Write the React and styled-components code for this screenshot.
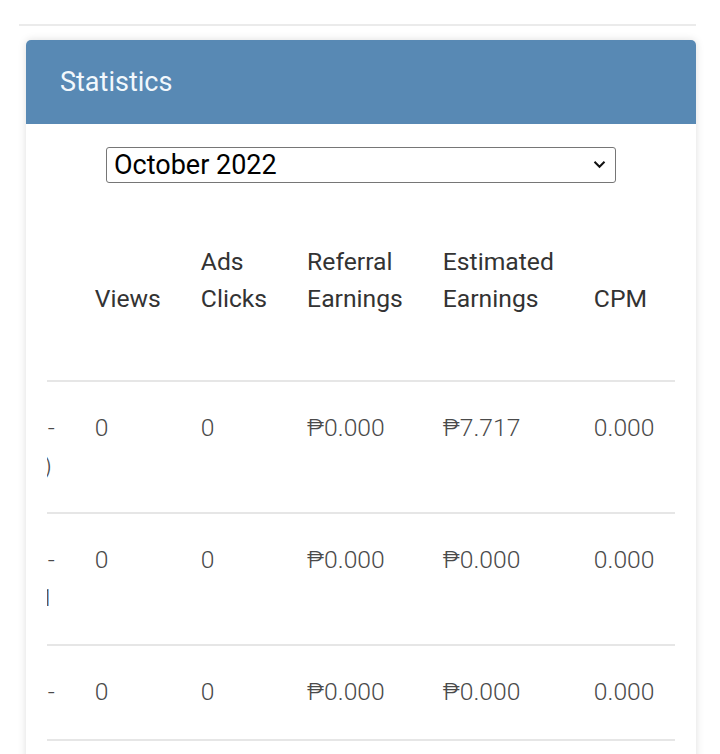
import React, { useLayoutEffect, useRef } from "react";
import styled, { createGlobalStyle } from "styled-components";

const GlobalStyle = createGlobalStyle`
  html, body {
    margin: 0;
    padding: 0;
    background: #ffffff;
    font-family: Roboto, "Liberation Sans", sans-serif;
  }
  * {
    box-sizing: border-box;
  }
`;

const Page = styled.div`
  width: 720px;
  padding: 24px 24px 40px 19px;
`;

const Divider = styled.div`
  height: 2px;
  background: #ebebeb;
`;

const Card = styled.section`
  margin: 14px 0 0 7px;
  background: #ffffff;
  border-radius: 5px;
  box-shadow: 0 0 9px rgba(0, 0, 0, 0.13);
`;

const CardHeader = styled.header`
  height: 84px;
  display: flex;
  align-items: center;
  padding: 0 34px;
  background: #5889b4;
  border-radius: 5px 5px 0 0;
`;

const Title = styled.h2`
  margin: 0;
  font-size: 27px;
  font-weight: 400;
  color: #f2f8fc;
`;

const CardBody = styled.div`
  padding: 23px 21px 0;
`;

const SelectWrap = styled.div`
  position: relative;
  width: 510px;
  margin: 0 auto 31px;
`;

const MonthSelect = styled.select`
  appearance: none;
  -webkit-appearance: none;
  display: block;
  width: 100%;
  height: 36px;
  padding: 0 30px 0 7px;
  border: 1px solid #767676;
  border-radius: 3px;
  background: #ffffff;
  color: #000000;
  font-family: Roboto, "Liberation Sans", sans-serif;
  font-size: 27px;
  line-height: 34px;
`;

const Chevron = styled.svg`
  position: absolute;
  right: 10px;
  top: 13px;
  width: 13px;
  height: 9px;
  pointer-events: none;
`;

const Scroller = styled.div`
  overflow-x: auto;
  scrollbar-width: none;
  &::-webkit-scrollbar {
    display: none;
  }
`;

const Table = styled.table`
  width: 100%;
  border-collapse: collapse;
  font-size: 24.7px;
`;

const Th = styled.th`
  padding: 29px 20px 63px;
  vertical-align: bottom;
  text-align: left;
  font-weight: 400;
  line-height: 37px;
  color: #333333;
  border-bottom: 2px solid #e6e6e6;
`;

const Td = styled.td`
  padding: 27px 20px 28px;
  vertical-align: top;
  text-align: left;
  font-weight: 300;
  line-height: 37.5px;
  color: #4a4a4a;
  border-bottom: 2px solid #e6e6e6;
`;

const PeriodCell = styled(Td)`
  text-align: right;
  white-space: nowrap;
`;

const PeriodLine = styled.span`
  display: block;
  padding-right: ${(p) => p.$inset || 0}px;
`;

const rows = [
  { period: ["Oct 01 -", "(Oct 10)"], inset: 3, views: 0, clicks: 0, referral: "₱0.000", estimated: "₱7.717", cpm: "0.000" },
  { period: ["Oct 11 -", "Oct 21"], inset: 1, views: 0, clicks: 0, referral: "₱0.000", estimated: "₱0.000", cpm: "0.000" },
  { period: ["Oct 22 -"], views: 0, clicks: 0, referral: "₱0.000", estimated: "₱0.000", cpm: "0.000" },
  { period: ["Oct 31 -", "Oct 31"], inset: 3, views: 0, clicks: 0, referral: "₱0.000", estimated: "₱0.000", cpm: "0.000" },
];

const App = () => {
  const scrollRef = useRef(null);

  useLayoutEffect(() => {
    const el = scrollRef.current;
    if (el) el.scrollLeft = el.scrollWidth;
  }, []);

  return (
    <Page>
      <GlobalStyle />
      <Divider />
      <Card>
        <CardHeader>
          <Title>Statistics</Title>
        </CardHeader>
        <CardBody>
          <SelectWrap>
            <MonthSelect defaultValue="2022-10">
              <option value="2022-10">October 2022</option>
              <option value="2022-09">September 2022</option>
              <option value="2022-08">August 2022</option>
            </MonthSelect>
            <Chevron viewBox="0 0 13 9">
              <path d="M1.5 1.8 L6.5 6.8 L11.5 1.8" fill="none" stroke="#111" strokeWidth="2" />
            </Chevron>
          </SelectWrap>
          <Scroller ref={scrollRef}>
            <Table>
              <thead>
                <tr>
                  <Th>Date</Th>
                  <Th>Views</Th>
                  <Th>Ads Clicks</Th>
                  <Th>Referral Earnings</Th>
                  <Th>Estimated Earnings</Th>
                  <Th>CPM</Th>
                </tr>
              </thead>
              <tbody>
                {rows.map((row, i) => (
                  <tr key={i}>
                    <PeriodCell>
                      {row.period.map((line, j) => (
                        <PeriodLine key={j} $inset={j > 0 ? row.inset : 0}>
                          {line}
                        </PeriodLine>
                      ))}
                    </PeriodCell>
                    <Td>{row.views}</Td>
                    <Td>{row.clicks}</Td>
                    <Td>{row.referral}</Td>
                    <Td>{row.estimated}</Td>
                    <Td>{row.cpm}</Td>
                  </tr>
                ))}
              </tbody>
            </Table>
          </Scroller>
        </CardBody>
      </Card>
    </Page>
  );
};

export default App;
